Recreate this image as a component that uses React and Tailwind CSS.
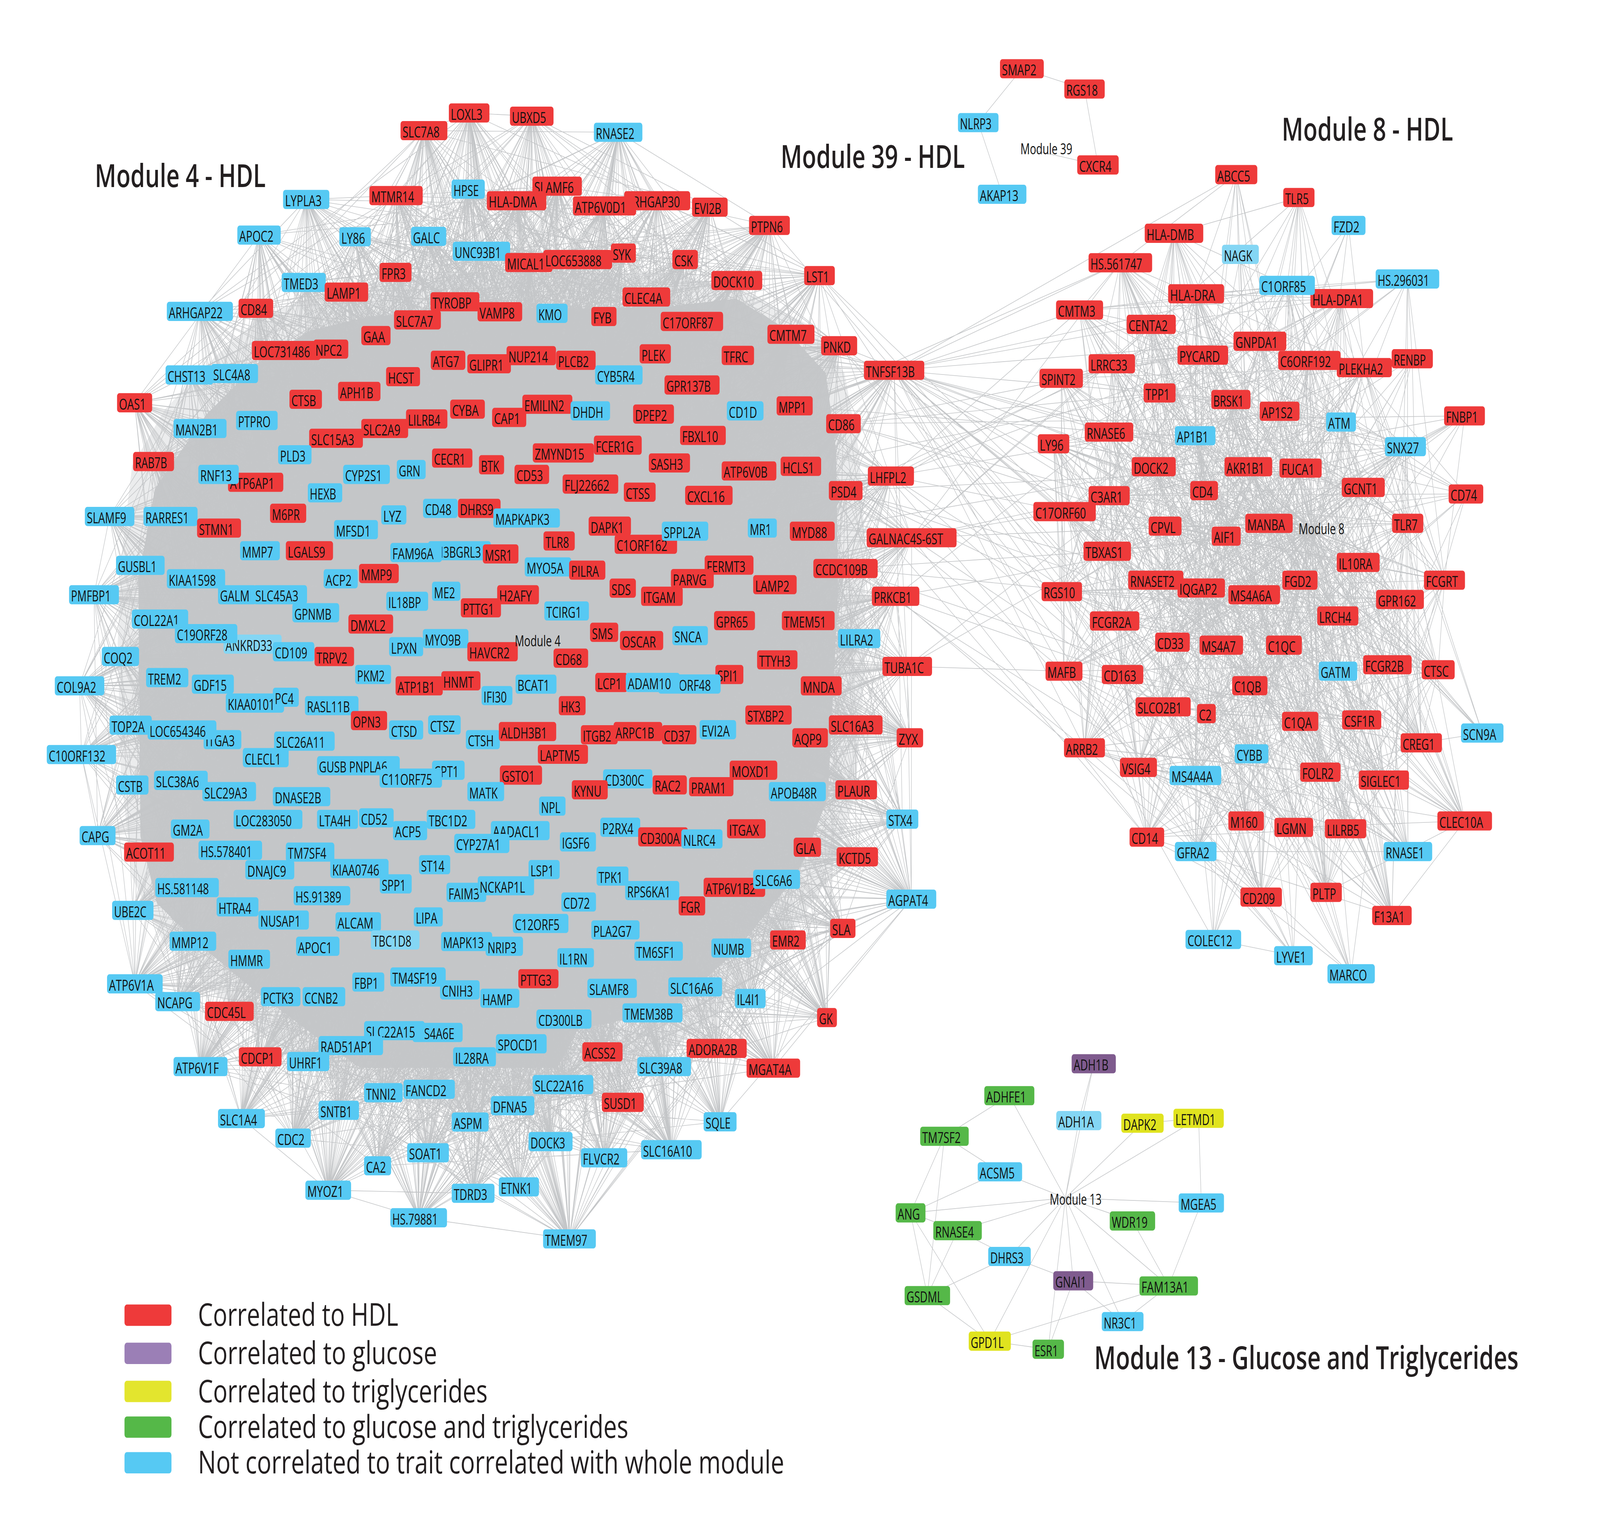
import React, { useMemo } from 'react';

const COLORS = { r: '#ee3a3a', b: '#56c9f3', l: '#84d6f4', g: '#55b848', y: '#e0e31f', p: '#7f5b8e' };
const MW = { A: 612, B: 542, C: 580, D: 666, E: 492, F: 487, G: 646, H: 652, I: 239, J: 315, K: 524, L: 472, M: 804, N: 658, O: 689, P: 532, Q: 689, R: 538, S: 493, T: 497, U: 647, V: 558, W: 846, X: 571, Y: 541, Z: 553, '.': 207, '-': 307, ' ': 212 };
const FS = 11.3;
const textW = (s) => { let w = 0; for (const ch of s) w += MW[ch] ?? (/[0-9]/.test(ch) ? 513 : 500); return (w * FS) / 1000; };

const parse = (str) => str.trim().split('\n').map((line) => {
  const [c, label, x, y] = line.trim().split(',');
  const left = +x, cy = +y;
  const tl = textW(label);
  const bw = tl * 1.15 + 4;
  return { c, label, left, cy, tl, bw, cx: left + bw / 2 };
});

const M4 = parse(`
r,LOXL3,434.8,87.8
r,UBXD5,494,90.3
r,SLC7A8,388,101.5
b,RNASE2,575.3,102.8
r,MTMR14,357.8,152
b,HPSE,437.4,147
r,SLAMF6,515.7,144.7
r,HLA-DMA,471.6,156
r,ARHGAP30,604.6,156
r,ATP6V0D1,555,160
b,LYPLA3,274.2,155
r,EVI2B,670.4,161
r,PTPN6,725.6,175.2
b,APOC2,229.9,182.7
b,LY86,328.7,184
b,GALC,398.2,183.7
b,UNC93B1,438.6,195.3
r,MICAL1,489.3,204
r,LOC653888,526.3,201.7
r,SYK,591.7,196.7
r,CSK,651.3,201.7
r,DOCK10,689.1,218
r,LST1,779,214.2
b,TMED3,272.9,219.5
r,FPR3,367.7,211.7
r,LAMP1,314.5,227
r,CD84,231.1,239.6
b,ARHGAP22,161.6,242
r,TYROBP,417,234.5
r,SLC7A7,381.7,248.6
r,VAMP8,462.6,242.3
b,KMO,519.6,243.5
r,CLEC4A,603,230.8
r,FYB,572.8,246
r,C17ORF87,640,249.8
r,CMTM7,743.4,259.8
r,GAA,350,260.8
r,LOC731486,244,272.4
r,NPC2,303.7,271.3
r,ATG7,417.3,280
r,GLIPR1,452.7,282.7
r,NUP214,490.7,276.4
r,PLCB2,538.7,280
b,CYB5R4,576.5,291.4
r,PLEK,619.6,275
r,TFRC,699.1,276.2
r,PNKD,795.4,268.7
b,CHST13,160.4,291.4
b,SLC4A8,204.6,290.3
r,HCST,374,292.7
r,TNFSF13B,836.9,287.8
r,OAS1,113.4,313
r,CTSB,280.4,310.3
r,APH1B,327.5,304.2
r,GPR137B,643.7,299.2
r,MPP1,752.3,315.4
b,PTPRO,228.7,326.8
b,MAN2B1,168.1,333
r,SLC2A9,350,333
r,LILRB4,393.3,325.6
r,CYBA,436.1,318
r,CAP1,476.7,324.4
r,EMILIN2,506,314.2
b,DHDH,552.7,319.3
r,DPEP2,613.3,321.8
b,CD1D,704.1,319.3
r,CD86,800.3,329.3
r,SLC15A3,299.5,340.6
b,PLD3,269.4,353.4
r,FCER1G,575.3,346
r,FBXL10,658.8,338.4
r,RAB7B,128.9,358.7
r,CECR1,418.5,356
r,BTK,464,361.2
r,ZMYND15,516.1,352
r,SASH3,628.5,359.8
r,HCLS1,756.2,362.4
r,ATP6AP1,220.9,374.8
b,RNF13,192.1,368.7
b,CYP2S1,332.4,368.7
b,GRN,384.4,364.9
r,CD53,498.4,368.7
r,FLJ22662,545,376.2
r,ATP6V0B,699.1,366
r,LHFPL2,840.7,370
b,HEXB,298.2,383
r,CTSS,604.3,382.5
r,CXCL16,663.7,385
r,PSD4,802.9,381.3
b,SLAMF9,82.2,401.4
b,RARRES1,139,401.4
r,STMN1,190.9,410.4
r,M6PR,261.6,398.9
b,MFSD1,323.6,411.6
b,LYZ,369.3,400.2
b,CD48,409.8,395.1
r,DHRS9,443.7,395.1
b,MAPKAPK3,477.9,402.6
r,DAPK1,570.2,408.9
r,C1ORF162,595.4,423
b,SPPL2A,641.1,412.8
b,MR1,724.4,410.4
r,MYD88,765.1,412.8
r,GALNAC4S-6ST,839.5,417.9
b,MMP7,232.6,428
r,LGALS9,276.9,428
b,SH3BGRL3,414.7,428
b,FAM96A,378.1,429.4
r,MSR1,467.7,430.5
r,TLR8,526.5,420.4
b,MYO5A,508.3,440.6
r,PILRA,551.3,443.1
r,FERMT3,682.6,439.2
r,CCDC109B,787.9,441.8
b,GUSBL1,112.4,439.4
b,KIAA1598,161.6,449.8
b,ACP2,313.5,449.8
r,MMP9,347.8,445.7
r,PARVG,649.9,449.6
r,LAMP2,729.6,454.4
b,PMFBP1,66.9,462.2
b,GALM,211.2,462.2
b,SLC45A3,245.4,462.2
b,IL18BP,374.2,467.3
b,ME2,418.5,459.5
r,H2AFY,481.6,462.2
r,PTTG1,446.4,472.4
r,SDS,590.5,457.1
r,ITGAM,621,463.4
r,PRKCB1,844.6,463.4
b,GPNMB,283.2,476.2
b,TCIRG1,527.3,474.8
b,COL22A1,127.7,481.1
l,ANKRD33,216.5,500.6
b,C19ORF28,169.4,492.4
r,DMXL2,337.5,485
r,GPR65,691.7,482.3
r,TMEM51,757.4,482.3
b,LPXN,376.9,502.6
b,MYO9B,409.6,496.3
r,HAVCR2,452.7,506.5
r,SMS,571.6,491.4
r,OSCAR,600.6,497.8
b,SNCA,651.3,494
b,LILRA2,811.8,496.3
b,CD109,264.3,506.5
r,TRPV2,304.7,510.2
r,CD68,536.2,511.5
b,COQ2,98.6,510.2
r,TTYH3,733.4,512.8
r,TUBA1C,854.8,517.9
b,COL9A2,53.1,533
b,TREM2,141.5,526.6
b,GDF15,185.8,531.7
b,PKM2,344,524.2
r,ATP1B1,383.2,533
r,HNMT,427.5,529.1
b,BCAT1,499.4,531.7
r,LCP1,576.6,530.4
r,SPI1,693,524.2
b,C15ORF48,637.6,531.6
b,ADAM10,606.2,530.4
b,KIAA0101,218.7,546.4
b,PC4,264.3,541.9
b,RASL11B,295.4,548.4
b,IFI30,466.5,540.6
r,MNDA,775.7,533
r,HK3,541.3,548.4
r,STXBP2,722,555.7
b,TOP2A,106.1,563.6
b,ITGA3,197.2,574.8
b,LOC654346,143,567.3
r,OPN3,339.9,560
b,CTSD,376.9,567.3
b,CTSZ,414.7,563.4
b,CTSH,451.3,574.8
r,ALDH3B1,483.2,568.5
r,ITGB2,562.7,571
r,ARPC1B,594.4,568.5
r,CD37,641.1,571
b,EVI2A,677.7,567.1
r,SLC16A3,802.9,563.4
r,AQP9,767.5,573.4
r,ZYX,868.6,573.4
b,C10ORF132,45.3,586.4
b,SLC26A11,265.5,576
b,CLECL1,235.2,588.8
r,LAPTM5,521,586.2
b,GUSB PNPLA6,307.1,595.1
b,CPT1,418.5,598.6
b,C11ORF75,367.7,604.7
b,CSTB,112.4,610.1
b,SLC38A6,149.2,606.5
b,SLC29A3,196,615.2
r,GSTO1,484.2,602.4
b,CD300C,584.2,605.3
r,MOXD1,706.8,598.6
b,DNASE2B,264.3,619.1
b,MATK,452.7,615.2
r,KYNU,553.9,613.8
r,RAC2,632.2,610
r,PRAM1,667.5,611.4
b,APOB48R,744.8,615.2
r,PLAUR,809.2,613.8
b,NPL,522.2,626.5
b,CAPG,77.1,649.4
b,GM2A,165.5,644.3
b,LOC283050,226.3,636.8
b,CD52,347.8,635.6
b,LTA4H,307.1,636.8
b,TBC1D2,413.4,636.8
b,ACP5,380.7,645.5
b,AADACL1,475.5,645.5
b,CYP27A1,440,655.5
b,P2RX4,581.5,642.9
r,CD300A,618.2,650.4
b,NLRC4,660,652
r,ITGAX,704.3,644.1
b,STX4,858.6,636.6
b,HS.578401,192.3,660.8
b,TM7SF4,276.9,662.2
b,IGSF6,542.4,654.3
r,ACOT11,120.2,662.2
r,GLA,768.8,658.4
r,KCTD5,810.4,665.9
b,DNAJC9,237.6,676
b,KIAA0746,319.9,675
b,ST14,405.9,672
b,LSP1,512,675.8
b,TPK1,577.9,680.9
r,ATP6V1B2,681.6,689.6
b,SLC6A6,729.6,683.4
b,HS.581148,150.4,689.8
b,SPP1,367.9,686.9
b,FAIM3,432.5,693.5
b,NCKAP1L,462.8,688.4
b,RPS6KA1,605.6,692.1
b,AGPAT4,858.6,698.8
b,HS.91389,284.4,696.1
b,CD72,543.8,701
r,FGR,657.4,704
b,UBE2C,108.6,707.5
b,HTRA4,209.8,704.8
b,MMP12,164.3,731.5
b,NUSAP1,250.3,715
b,ALCAM,325,716.4
b,LIPA,400.8,712.6
b,C12ORF5,496.8,717.7
b,PLA2G7,572.8,722.7
r,SLA,804.2,721.5
b,APOC1,286.8,735.4
l,TBC1D8,359.3,730.5
b,MAPK13,427.3,731.7
b,NRIP3,470.4,735.4
b,TM6SF1,614.5,739.2
r,EMR2,746,730.5
b,NUMB,689.1,736.8
b,ATP6V1A,103.7,764.6
b,HMMR,221.2,745.5
b,IL1RN,539.9,744.3
b,FBP1,341.3,763.2
b,TM4SF19,378.1,759.3
r,PTTG3,502.1,760.6
b,CNIH3,426.3,769.3
b,HAMP,465.3,775.8
b,SLAMF8,569,768.1
b,SLC16A6,647.4,767
b,IL4I1,711.9,776
b,NCAPG,150.4,778.4
b,PCTK3,252.7,774.6
b,CCNB2,293.1,774.6
r,CDC45L,198.6,786
r,GK,791.5,790.8
b,CD300LB,519.6,792
b,TMEM38B,603,787.2
b,MS4A6E,399.6,802.4
b,SLC22A15,352.7,801
b,RAD51AP1,308.6,812.6
b,SPOCD1,480.4,811.2
r,ACSS2,564.1,817.5
r,ADORA2B,665.1,814.8
b,ATP6V1F,168.1,828.9
r,CDCP1,231.4,821.3
b,UHRF1,278.1,825
b,IL28RA,438.9,821.3
b,SLC39A8,617.3,828.9
r,MGAT4A,723.2,830.1
b,FANCD2,390.9,846.6
b,TNNI2,352.7,849.2
b,SLC22A16,516,842.9
r,SUSD1,583,856.7
b,SNTB1,308.6,862.9
b,SLC1A4,211.2,869.3
b,DFNA5,475.5,859.3
b,CDC2,266.7,884.5
b,ASPM,437.6,872
b,SQLE,681.6,871.8
b,DOCK3,512,887.2
b,SOAT1,394.4,895.9
b,FLVCR2,562.7,899.8
b,SLC16A10,621,893.5
b,CA2,352.7,906
b,MYOZ1,295.8,925
b,TDRD3,437.6,927.4
b,ETNK1,483.2,922.4
b,HS.79881,378.1,946.4
b,TMEM97,526.1,962.8
`);

const M8 = parse(`
r,ABCC5,1177.2,135.7
r,TLR5,1243.1,153.5
b,FZD2,1289.9,175.2
r,HLA-DMB,1108.9,181.3
l,NAGK,1183.7,197.7
r,HS.561747,1054.5,204.2
r,HLA-DPA1,1269.4,232
b,C1ORF85,1219.9,221.8
b,HS.296031,1332.6,216.8
r,HLA-DRA,1131.6,228.3
r,CMTM3,1023,240.9
r,CENTA2,1091.4,252.1
r,GNPDA1,1194.9,265.2
r,PYCARD,1140.6,276
r,C6ORF192,1238.2,280.1
r,RENBP,1348.1,278.8
r,PLEKHA2,1294.9,285.7
r,LRRC33,1054.5,282.7
r,SPINT2,1006.9,294
r,TPP1,1107.8,305.4
r,BRSK1,1173.4,310.5
r,AP1S2,1220.2,319.6
b,ATM,1284.6,328
r,FNBP1,1398.9,323.2
r,RNASE6,1050.8,335.8
r,LY96,1005.3,344.9
b,AP1B1,1138.1,338.6
b,SNX27,1341.6,347.1
r,DOCK2,1096.3,362.7
r,AKR1B1,1186.2,362.7
r,FUCA1,1239.4,363.8
r,GCNT1,1299.8,378.8
r,CD74,1403.3,383.9
r,CD4,1153,381.3
r,C3AR1,1054.5,385.2
r,C17ORF60,1001,397.6
r,CPVL,1112.7,408.9
r,MANBA,1206.3,406.7
r,TLR7,1348.5,406.7
r,AIF1,1173.8,416.7
r,TBXAS1,1049.6,428.4
r,IL10RA,1294.9,437.1
r,RNASET2,1092.9,450.9
r,IQGAP2,1140.6,457
r,FGD2,1242.2,450.9
r,FCGRT,1379.4,450.9
r,RGS10,1009,459.8
r,MS4A6A,1189.9,462.2
r,GPR162,1333,465.9
r,LRCH4,1276,478.7
r,FCGR2A,1055.8,482.6
r,CD33,1119,499.1
r,MS4A7,1162,501.4
r,C1QC,1226.4,501.4
r,MAFB,1012.8,521.6
r,CD163,1067.3,524.2
b,GATM,1277.5,521.6
r,FCGR2B,1320.5,516.6
r,CTSC,1377.2,520.5
r,C1QB,1193.6,532.9
r,SLCO2B1,1100,549.3
r,C2,1159.5,554.6
r,C1QA,1241.9,560.6
r,CSF1R,1300.1,559.5
b,SCN9A,1415.3,569.7
r,CREG1,1356.8,577.3
r,ARRB2,1030.7,581.2
b,CYBB,1196,585.8
r,VSIG4,1084.9,596.4
b,MS4A4A,1132.9,602.7
r,FOLR2,1259.5,600.1
r,SIGLEC1,1316.2,606.2
r,CLEC10A,1392.4,638
r,M160,1189.9,638
r,LGMN,1234.5,643
r,LILRB5,1283.4,644.1
r,CD14,1094.2,650.6
b,GFRA2,1138.1,661.8
b,RNASE1,1340.4,661.8
r,PLTP,1269.4,693.5
r,CD209,1201.6,697.2
r,F13A1,1329.2,711.5
b,COLEC12,1148.4,730.1
b,LYVE1,1234.2,742.7
b,MARCO,1285.9,756.8
`);

const M39 = parse(`
r,SMAP2,968.7,53.4
r,RGS18,1031,69.2
b,NLRP3,928,95.3
r,CXCR4,1043.5,128.2
b,AKAP13,947.3,151
`);

const M13 = parse(`
p,ADH1B,1038.1,826.7
g,ADHFE1,953.5,851.5
l,ADH1A,1023.2,870.9
y,DAPK2,1086.2,872.9
y,LETMD1,1136.7,869.1
g,TM7SF2,891.4,883.1
b,ACSM5,947.1,910.7
b,MGEA5,1141.8,934.9
g,ANG,867.6,942.6
g,WDR19,1075,948.9
g,RNASE4,904.1,956.4
b,DHRS3,957.3,976.5
p,GNAI1,1020.3,995.4
g,FAM13A1,1103.8,999.4
g,GSDML,876.3,1006.9
b,NR3C1,1067.3,1027.1
y,GPD1L,938.4,1042.3
g,ESR1,1000.2,1048.6
`);

const HUB4 = [512, 499];
const HUB8 = [1271, 412];
const HUB13 = [1032, 931];
const HUB39 = [1002, 117];

function mulberry32(a) {
  return function () {
    a |= 0; a = (a + 0x6d2b79f5) | 0;
    let t = Math.imul(a ^ (a >>> 15), 1 | a);
    t = (t + Math.imul(t ^ (t >>> 7), 61 | t)) ^ t;
    return ((t ^ (t >>> 14)) >>> 0) / 4294967296;
  };
}

const seg = (a, b) => `M${a[0].toFixed(1)} ${a[1].toFixed(1)}L${b[0].toFixed(1)} ${b[1].toFixed(1)}`;

function genEdges(nodes, K, rand, hub, sparse) {
  let d = '';
  const n = nodes.length;
  const w = nodes.map((nd) => (sparse && sparse.has(nd.label) ? 0.3 : 1));
  const total = w.reduce((a, b) => a + b, 0);
  const pick = () => { let r = rand() * total; for (let i = 0; i < n; i++) { r -= w[i]; if (r <= 0) return i; } return n - 1; };
  nodes.forEach((a, i) => {
    const k = Math.max(1, Math.round(K * w[i]));
    for (let j = 0; j < k; j++) {
      const t = pick();
      if (t === i) continue;
      d += seg([a.cx, a.cy], [nodes[t].cx, nodes[t].cy]);
    }
    if (hub) d += seg([a.cx, a.cy], hub);
  });
  return d;
}

const LEGEND = [
  ['#ee3a3a', 'Correlated to HDL', 1022.1, 194],
  ['#9b7fb6', 'Correlated to glucose', 1051.8, 231.6],
  ['#e3e52e', 'Correlated to triglycerides', 1081.4, 280.5],
  ['#55b848', 'Correlated to glucose and triglycerides', 1109.1, 416.9],
  ['#56c9f3', 'Not correlated to trait correlated with whole module', 1136.8, 567.9],
];

const CORE = '150,380 200,322 250,282 300,257 358,246 450,240 550,240 650,238 713,232 760,255 800,290 810,350 812,460 802,620 772,680 712,740 650,785 560,800 540,830 349,830 310,808 250,772 190,732 152,702 136,650 134,450';
const HALO = '118,430 128,362 160,318 210,276 252,246 330,222 450,212 560,212 650,212 722,226 782,252 818,290 832,350 838,420 838,520 828,620 803,682 762,732 702,782 642,822 562,852 480,862 400,857 330,842 268,812 208,772 158,732 128,682 117,600 114,500';

function Node({ n }) {
  return (
    <g>
      <rect x={n.left} y={n.cy - 7.45} width={n.bw} height={14.9} rx={2.4} fill={COLORS[n.c]} />
      <text x={n.left + 1.9} y={n.cy + 5.3} fontSize={11.5} textLength={n.tl} lengthAdjust="spacingAndGlyphs" fill="#111">{n.label}</text>
    </g>
  );
}

export default function App() {
  const paths = useMemo(() => {
    const rand = mulberry32(12345);
    const e4 = genEdges(M4, 26, rand, HUB4);
    const sparse8 = new Set(['ABCC5', 'TLR5', 'FZD2', 'HS.296031', 'SCN9A', 'MARCO', 'LYVE1', 'COLEC12', 'CD74', 'FNBP1', 'NAGK', 'RENBP']);
    const e8 = genEdges(M8, 14, rand, HUB8, sparse8);
    const by = {};
    [...M4, ...M8, ...M39, ...M13].forEach((n) => { by[n.label] = n; });
    const P = (l) => [by[l].cx, by[l].cy];
    let inter = '';
    const srcs = [['TNFSF13B', 26], ['LHFPL2', 8], ['PSD4', 7], ['GALNAC4S-6ST', 8], ['CD86', 6], ['PNKD', 4], ['PRKCB1', 5], ['LST1', 3], ['MYD88', 3], ['CCDC109B', 4], ['TUBA1C', 3], ['HCLS1', 2], ['MPP1', 3]];
    const w8 = M8.map((n) => (n.cx < 1130 ? 3 : n.cx < 1260 ? 1.4 : 0.4));
    const tot = w8.reduce((a, b) => a + b, 0);
    srcs.forEach(([s, k]) => {
      for (let i = 0; i < k; i++) {
        let r = rand() * tot; let t = 0;
        for (; t < M8.length; t++) { r -= w8[t]; if (r <= 0) break; }
        t = Math.min(t, M8.length - 1);
        inter += seg(P(s), [M8[t].cx, M8[t].cy]);
      }
    });
    const e13pairs = [
      ['ADH1B', 'H'], ['ADH1A', 'H'], ['ADH1B', 'ADH1A'], ['ADHFE1', 'TM7SF2'], ['ADHFE1', 'H'], ['TM7SF2', 'ACSM5'], ['TM7SF2', 'ANG'], ['TM7SF2', 'GSDML'],
      ['ACSM5', 'H'], ['ACSM5', 'ANG'], ['DAPK2', 'LETMD1'], ['DAPK2', 'H'], ['LETMD1', 'H'], ['LETMD1', 'MGEA5'], ['MGEA5', 'H'], ['ANG', 'H'],
      ['RNASE4', 'H'], ['DHRS3', 'H'], ['GNAI1', 'H'], ['GPD1L', 'H'], ['WDR19', 'H'], ['FAM13A1', 'H'], ['NR3C1', 'H'], ['ESR1', 'H'],
      ['ANG', 'RNASE4'], ['ANG', 'GSDML'], ['ANG', 'GPD1L'], ['RNASE4', 'DHRS3'], ['RNASE4', 'GSDML'], ['DHRS3', 'GNAI1'], ['DHRS3', 'GSDML'],
      ['GSDML', 'GPD1L'], ['GPD1L', 'ESR1'], ['GPD1L', 'FAM13A1'], ['GNAI1', 'FAM13A1'], ['GNAI1', 'NR3C1'], ['GNAI1', 'ESR1'], ['WDR19', 'FAM13A1'],
      ['MGEA5', 'FAM13A1'], ['FAM13A1', 'NR3C1'],
    ];
    let small = '';
    e13pairs.forEach(([a, b]) => { small += seg(P(a), b === 'H' ? HUB13 : P(b)); });
    [['SMAP2', 'RGS18'], ['SMAP2', 'NLRP3'], ['RGS18', 'CXCR4'], ['NLRP3', 'AKAP13'], ['CXCR4', 'H']].forEach(([a, b]) => { small += seg(P(a), b === 'H' ? HUB39 : P(b)); });
    return { e4, e8, inter, small };
  }, []);

  return (
    <div className="w-screen h-screen bg-white overflow-hidden">
      <svg viewBox="0 0 1549.92 1176.63" preserveAspectRatio="none" className="block w-full h-full" fontFamily="'Open Sans', 'Liberation Sans', sans-serif">
        <polygon points={HALO} fill="#c6c8ca" fillOpacity={0.35} />
        <polygon points={CORE} fill="#c6c8ca" />
        <g fill="none" stroke="#c4c6c8" strokeWidth={0.48}>
          <path d={paths.e4} />
          <path d={paths.e8} />
          <path d={paths.inter} />
          <path d={paths.small} />
        </g>
        {[...M4, ...M8, ...M39, ...M13].map((n, i) => <Node key={i} n={n} />)}
        <text x={498.6} y={502.3} fontSize={11.5} textLength={44.4} lengthAdjust="spacingAndGlyphs" fill="#111">Module 4</text>
        <text x={1258} y={415.1} fontSize={11.5} textLength={44.4} lengthAdjust="spacingAndGlyphs" fill="#111">Module 8</text>
        <text x={988.5} y={120} fontSize={11.5} textLength={50.2} lengthAdjust="spacingAndGlyphs" fill="#111">Module 39</text>
        <text x={1016.9} y={936.2} fontSize={11.5} textLength={50.2} lengthAdjust="spacingAndGlyphs" fill="#111">Module 13</text>

        <g fill="#231f20" fontWeight={600} fontSize={24.5}>
          <text x={91.9} y={145.4} textLength={165.5} lengthAdjust="spacingAndGlyphs">Module 4 - HDL</text>
          <text x={756.2} y={130.4} textLength={178.5} lengthAdjust="spacingAndGlyphs">Module 39 - HDL</text>
          <text x={1241.6} y={109.2} textLength={166} lengthAdjust="spacingAndGlyphs">Module 8 - HDL</text>
          <text x={1060} y={1063.9} textLength={411} lengthAdjust="spacingAndGlyphs">Module 13 - Glucose and Triglycerides</text>
        </g>

        <g>
          {LEGEND.map(([c, t, cy, w]) => (
            <g key={t}>
              <rect x={120.6} y={cy - 8.3} width={45.5} height={16.6} rx={2.5} fill={c} />
              <text x={191.8} y={cy + 8.4} fontSize={24.3} fill="#231f20" textLength={w} lengthAdjust="spacingAndGlyphs">{t}</text>
            </g>
          ))}
        </g>
      </svg>
    </div>
  );
}
